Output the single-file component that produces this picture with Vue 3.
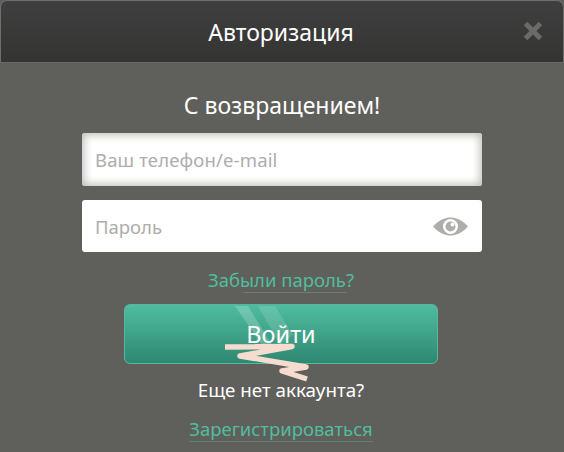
<script setup>
const title = 'Авторизация'
</script>

<template>
  <div class="page">
    <header class="head">
      <h1 class="title">{{ title }}</h1>
      <svg class="close" width="20" height="20" viewBox="0 0 20 20" aria-hidden="true">
        <path d="M2.5 2.5 L17.5 17.5 M17.5 2.5 L2.5 17.5" stroke="#6a6a68" stroke-width="5" fill="none" />
      </svg>
    </header>
    <main class="body">
      <h2 class="welcome">С возвращением!</h2>
      <div class="field field-focus"><span class="ph ph-wide">Ваш телефон/e-mail</span></div>
      <div class="field">
        <span class="ph">Пароль</span>
        <svg class="eye" width="35" height="19" viewBox="0 0 35 19" aria-hidden="true">
          <path d="M0 9.500 C6 3 12 0.500 17.500 0.500 C23 0.500 29 3 35 9.500 C29 16 23 18.500 17.500 18.500 C12 18.500 6 16 0 9.500 Z" fill="#aeaeac" />
          <circle cx="17.500" cy="9.500" r="7.500" fill="#fff" />
          <circle cx="17.500" cy="9.500" r="5" fill="#aeaeac" />
          <circle cx="19.500" cy="7.500" r="2" fill="#fff" />
        </svg>
      </div>
      <a class="link forgot">Забыли пароль?</a>
      <button class="btn" type="button">
        <svg class="shine" width="312" height="58" viewBox="0 0 312 58" aria-hidden="true">
          <path d="M110 1 L123 1 L147 40 L137 40 Z" fill="#fff" opacity=".2" />
          <path d="M133 1 L150 1 L168 30 L155 40 Z" fill="#fff" opacity=".13" />
        </svg>
        <span class="btn-label">Войти</span>
      </button>
      <p class="noacc">Еще нет аккаунта?</p>
      <a class="link reg">Зарегистрироваться</a>
    </main>
    <svg class="squiggle" width="100" height="45" viewBox="0 0 100 45" aria-hidden="true">
      <path d="M1 5 L68 4.500 L16 14 L82 25 L58 29 L83 37" stroke="#f6dccf" stroke-width="5.500" fill="none" stroke-linejoin="round" />
    </svg>
  </div>
</template>

<style>
html, body { margin: 0; background: #5f5f5b; }
</style>

<style scoped>
.page {
  position: relative;
  width: 564px;
  height: 452px;
  overflow: hidden;
  background: #5f5f5b;
  font-family: "Noto Sans", "Open Sans", sans-serif;
}
.head {
  position: relative;
  height: 63px;
  box-sizing: border-box;
  display: flex;
  align-items: center;
  justify-content: center;
  border: 1px solid #6f6f6e;
  border-bottom-color: #6a6a67;
  border-radius: 7px 7px 0 0;
  background: linear-gradient(#3f3f3f, #343433);
}
.title {
  margin: 0 2px 0 0;
  font-size: 23px;
  font-weight: 400;
  color: #fff;
}
.close { position: absolute; right: 20px; top: 20px; }
.body {
  display: flex;
  flex-direction: column;
  align-items: center;
}
.welcome {
  margin: 25px 0 0;
  height: 34px;
  line-height: 34px;
  font-size: 23px;
  font-weight: 400;
  color: #fff;
}
.field {
  box-sizing: border-box;
  width: 400px;
  height: 53px;
  margin-top: 11px;
  padding: 0 13px;
  display: flex;
  align-items: center;
  justify-content: space-between;
  background: #fff;
  border-radius: 3px;
}
.field + .field { margin-top: 14px; height: 52px; }
.field-focus { box-shadow: inset 0 0 9px 2px #bdbdb9; }
.ph { font-size: 18.500px; color: #adadab; }
.ph-wide { letter-spacing: 0.150px; }
.eye { margin-right: 1px; }
.link {
  color: #52bd9e;
  font-size: 18.500px;
  line-height: 24px;
  border-bottom: 1px solid #5e7f72;
}
.forgot {
  margin-top: 16px;
  margin-right: 2px;
  border-image: linear-gradient(90deg, transparent 24%, #6f7c74 26%, #6f7c74 94%, transparent 95%) 1;
}
.btn {
  position: relative;
  box-sizing: border-box;
  width: 314px;
  height: 60px;
  margin-top: 11px;
  margin-right: 2px;
  padding: 0;
  border: 1px solid #57b79c;
  border-radius: 6px;
  background: linear-gradient(#4fbd9f, #2f8871);
  color: #fff;
  font: inherit;
  font-size: 23.500px;
  overflow: hidden;
}
.shine { position: absolute; left: 0; top: 0; }
.btn-label { position: relative; }
.noacc {
  margin: 13px 0 0;
  margin-right: 2px;
  line-height: 26px;
  font-size: 18.800px;
  color: #fff;
}
.reg { margin-top: 14px; margin-right: 2px; }
.squiggle { position: absolute; left: 224px; top: 342px; }
</style>
